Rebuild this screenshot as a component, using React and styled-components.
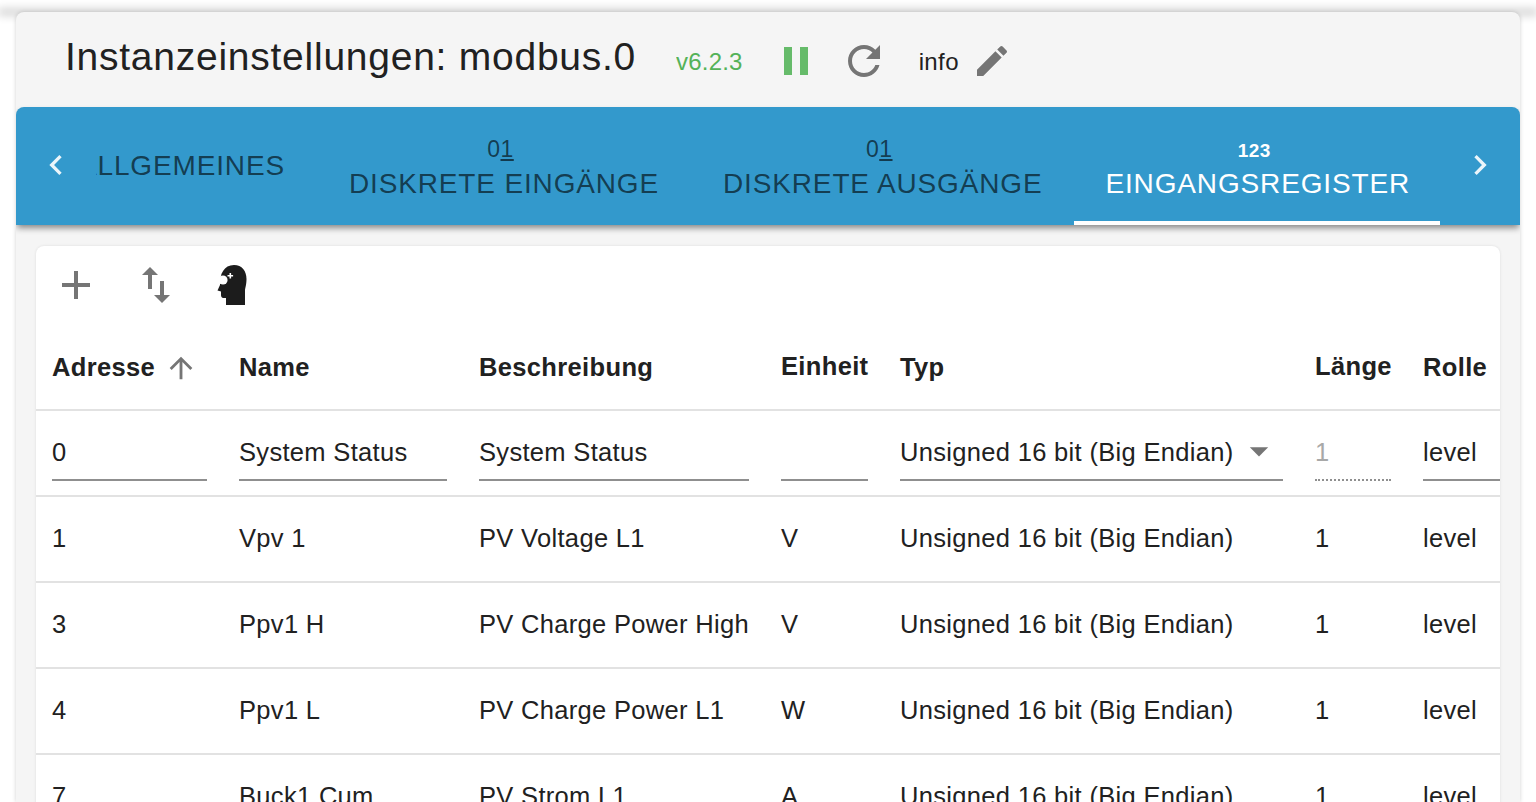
import React from 'react';
import styled, { createGlobalStyle } from 'styled-components';

const GlobalStyle = createGlobalStyle`
  html, body {
    margin: 0;
    height: 802px;
    overflow: hidden;
    background: #fff;
    font-family: "Liberation Sans", Arial, sans-serif;
  }
`;

const rows = [
  { address: '1', name: 'Vpv 1', description: 'PV Voltage L1', unit: 'V' },
  { address: '3', name: 'Ppv1 H', description: 'PV Charge Power High', unit: 'V' },
  { address: '4', name: 'Ppv1 L', description: 'PV Charge Power L1', unit: 'W' },
  { address: '7', name: 'Buck1 Cum', description: 'PV Strom L1', unit: 'A' },
];

const TYPE_LABEL = 'Unsigned 16 bit (Big Endian)';

const Icon = ({ d, size = 48, color = '#757575' }) => (
  <svg width={size} height={size} viewBox="0 0 24 24" fill={color}>
    <path d={d} />
  </svg>
);

const paths = {
  pause: 'M6 19h4V5H6v14zm8-14v14h4V5h-4z',
  refresh:
    'M17.65 6.35C16.2 4.9 14.21 4 12 4c-4.42 0-7.99 3.58-7.99 8s3.57 8 7.99 8c3.73 0 6.84-2.55 7.73-6h-2.08c-.82 2.33-3.04 4-5.65 4-3.31 0-6-2.69-6-6s2.69-6 6-6c1.66 0 3.14.69 4.22 1.78L13 11h7V4l-2.35 2.35z',
  edit: 'M3 17.25V21h3.75L17.81 9.94l-3.75-3.75L3 17.25zM20.71 7.04c.39-.39.39-1.02 0-1.41l-2.34-2.34a.9959.9959 0 0 0-1.41 0l-1.83 1.83 3.75 3.75 1.83-1.83z',
  add: 'M19 13h-6v6h-2v-6H5v-2h6V5h2v6h6v2z',
  swap: 'M16 17.01V10h-2v7.01h-3L15 21l4-3.99h-3zM9 3L5 6.99h3V14h2V6.99h3L9 3z',
  up: 'M4 12l1.41 1.41L11 7.83V20h2V7.83l5.58 5.59L20 12l-8-8-8 8z',
  left: 'M15.41 7.41 14 6l-6 6 6 6 1.41-1.41L10.83 12z',
  right: 'M10 6 8.59 7.41 13.17 12l-4.58 4.59L10 18l6-6z',
  drop: 'M7 10l5 5 5-5z',
};

const HeadSvg = styled.svg`
  margin-left: -8px;
`;

const HeadIcon = () => (
  <HeadSvg width="30" height="40" viewBox="0 0 30 40">
    <path
      fill="#1c1c1c"
      d="M9 40V33H6.5C4.5 33 4 31.5 4 30V26.5L0.5 25.5L3 20C2.5 9 7 0 17 0C25 0 29.5 6 29.5 14C29.5 20 28 23 28 26V40Z"
    />
    <circle cx="6" cy="15" r="4.6" fill="#fff" />
    <path d="M10.5 10h2V8h1.6v2h2v1.6h-2v2h-1.6v-2h-2z" fill="#fff" />
  </HeadSvg>
);

const TopEdge = styled.div`
  height: 0;
  box-shadow: 0 0 10px 2px rgba(0, 0, 0, 0.32);
`;

const Paper = styled.main`
  margin: 12px 16px 0;
  height: 790px;
  background: #f5f5f5;
  border-radius: 8px 8px 0 0;
  box-shadow: 0 0 4px rgba(0, 0, 0, 0.18);
  overflow: hidden;
`;

const TitleBar = styled.header`
  height: 95px;
  display: flex;
  align-items: center;
  padding-left: 49px;
  color: #212121;
`;

const Title = styled.h1`
  margin: 0 0 6px;
  font-size: 39px;
  font-weight: 400;
  letter-spacing: 0.75px;
  white-space: nowrap;
`;

const Version = styled.span`
  margin: 5px 0 0 40px;
  font-size: 24px;
  letter-spacing: 0.2px;
  color: #4caf50;
  opacity: 0.95;
`;

const TitleIcon = styled.span`
  display: flex;
  margin: ${({ $margin }) => $margin};
`;

const InstanceName = styled.span`
  margin: 5px 0 0 31px;
  font-size: 24px;
  letter-spacing: 0.4px;
`;

const TabBar = styled.nav`
  position: relative;
  height: 118px;
  display: flex;
  background: #3399cc;
  border-radius: 8px 8px 0 0;
  box-shadow: 0 4px 6px -1px rgba(0, 0, 0, 0.45);
`;

const ScrollButton = styled.div`
  flex: 0 0 80px;
  display: flex;
  align-items: center;
  justify-content: center;
  padding-bottom: 2px;
  opacity: 0.9;
`;

const TabScroller = styled.div`
  flex: 1;
  min-width: 0;
  display: flex;
  justify-content: flex-end;
  overflow: hidden;
`;

const Tab = styled.div`
  flex: 0 0 auto;
  box-sizing: border-box;
  height: 118px;
  padding: ${({ $withIcon }) => ($withIcon ? '26px' : '4px')}
    ${({ $active }) => ($active ? '30px' : '32px')} 0
    ${({ $active }) => ($active ? '31px' : '32px')};
  display: flex;
  flex-direction: column;
  align-items: center;
  justify-content: ${({ $withIcon }) => ($withIcon ? 'flex-start' : 'center')};
  color: ${({ $active }) => ($active ? '#fff' : 'rgba(0, 0, 0, 0.62)')};
  border-bottom: 4px solid ${({ $active }) => ($active ? '#fff' : 'transparent')};
  font-size: 28px;
  letter-spacing: 0.85px;
  text-transform: uppercase;
  white-space: nowrap;
`;

const TabGlyph = styled.span`
  height: 35px;
  margin-right: 7px;
  padding-top: ${({ $bold }) => ($bold ? '2px' : '0')};
  box-sizing: border-box;
  font-size: ${({ $bold }) => ($bold ? '19px' : '23px')};
  font-weight: ${({ $bold }) => ($bold ? 700 : 400)};
  line-height: 32px;
  letter-spacing: 0.5px;
  & u {
    text-underline-offset: 2px;
  }
`;

const Content = styled.section`
  padding: 21px 20px 0;
`;

const Card = styled.div`
  background: #fff;
  border-radius: 8px 8px 0 0;
  box-shadow: 0 0 3px rgba(0, 0, 0, 0.1);
  overflow: hidden;
`;

const Toolbar = styled.div`
  height: 78px;
  display: flex;
  align-items: center;
  padding-left: 16px;
  gap: 32px;
`;

const ToolButton = styled.span`
  display: flex;
  width: 48px;
  justify-content: center;
`;

const Table = styled.table`
  width: 1464px;
  border-collapse: collapse;
  table-layout: fixed;
  color: #212121;
  font-size: 25.5px;
  letter-spacing: 0.32px;
`;

const HeadCell = styled.th`
  box-sizing: border-box;
  height: 86px;
  padding: 2px 0 0 16px;
  text-align: left;
  font-weight: 700;
  letter-spacing: 0.35px;
  white-space: nowrap;
  border-bottom: 2px solid #e2e2e2;
`;

const HeadInner = styled.div`
  display: flex;
  align-items: center;
  gap: 9px;
  margin-top: ${({ $raised }) => ($raised ? '-3px' : '0')};
`;

const Cell = styled.td`
  box-sizing: border-box;
  height: 86px;
  padding: 0 0 2px 16px;
  white-space: nowrap;
  overflow: hidden;
  border-bottom: 2px solid #e2e2e2;
`;

const Field = styled.div`
  box-sizing: border-box;
  height: 58px;
  width: ${({ $width }) => $width}px;
  margin: 6px 0 6px;
  padding-top: 15px;
  display: flex;
  justify-content: space-between;
  color: ${({ $disabled }) => ($disabled ? '#a8a8a8' : 'inherit')};
  border-bottom: 2px ${({ $disabled }) => ($disabled ? 'dotted' : 'solid')} #8f8f8f;
`;

const DropArrow = styled.span`
  display: flex;
  margin: -9px 2px 0 0;
`;

const columns = [187, 240, 302, 119, 415, 108, 93];

const App = () => (
  <>
    <GlobalStyle />
    <TopEdge />
    <Paper>
      <TitleBar>
        <Title>Instanzeinstellungen: modbus.0</Title>
        <Version>v6.2.3</Version>
        <TitleIcon $margin="2px 0 0 29px">
          <Icon d={paths.pause} color="#66bb6a" />
        </TitleIcon>
        <TitleIcon $margin="2px 0 0 20px">
          <Icon d={paths.refresh} />
        </TitleIcon>
        <InstanceName>info</InstanceName>
        <TitleIcon $margin="2px 0 0 13px">
          <Icon d={paths.edit} size={40} />
        </TitleIcon>
      </TitleBar>

      <TabBar>
        <ScrollButton>
          <Icon d={paths.left} size={40} color="#fff" />
        </ScrollButton>
        <TabScroller>
          <Tab>Allgemeines</Tab>
          <Tab $withIcon>
            <TabGlyph>
              0<u>1</u>
            </TabGlyph>
            Diskrete Eingänge
          </Tab>
          <Tab $withIcon>
            <TabGlyph>
              0<u>1</u>
            </TabGlyph>
            Diskrete Ausgänge
          </Tab>
          <Tab $withIcon $active>
            <TabGlyph $bold>123</TabGlyph>
            Eingangsregister
          </Tab>
        </TabScroller>
        <ScrollButton>
          <Icon d={paths.right} size={40} color="#fff" />
        </ScrollButton>
      </TabBar>

      <Content>
        <Card>
          <Toolbar>
            <ToolButton>
              <Icon d={paths.add} />
            </ToolButton>
            <ToolButton>
              <Icon d={paths.swap} />
            </ToolButton>
            <ToolButton>
              <HeadIcon />
            </ToolButton>
          </Toolbar>
          <Table>
            <colgroup>
              {columns.map((width, i) => (
                <col key={i} style={{ width }} />
              ))}
            </colgroup>
            <thead>
              <tr>
                <HeadCell>
                  <HeadInner>
                    Adresse
                    <Icon d={paths.up} size={34} />
                  </HeadInner>
                </HeadCell>
                <HeadCell>Name</HeadCell>
                <HeadCell>Beschreibung</HeadCell>
                <HeadCell>
                  <HeadInner $raised>Einheit</HeadInner>
                </HeadCell>
                <HeadCell>Typ</HeadCell>
                <HeadCell>
                  <HeadInner $raised>Länge</HeadInner>
                </HeadCell>
                <HeadCell>Rolle</HeadCell>
              </tr>
            </thead>
            <tbody>
              <tr>
                <Cell>
                  <Field $width={155}>0</Field>
                </Cell>
                <Cell>
                  <Field $width={208}>System Status</Field>
                </Cell>
                <Cell>
                  <Field $width={270}>System Status</Field>
                </Cell>
                <Cell>
                  <Field $width={87} />
                </Cell>
                <Cell>
                  <Field $width={383}>
                    {TYPE_LABEL}
                    <DropArrow>
                      <Icon d={paths.drop} size={44} />
                    </DropArrow>
                  </Field>
                </Cell>
                <Cell>
                  <Field $width={76} $disabled>
                    1
                  </Field>
                </Cell>
                <Cell>
                  <Field $width={77}>level</Field>
                </Cell>
              </tr>
              {rows.map((row) => (
                <tr key={row.address}>
                  <Cell>{row.address}</Cell>
                  <Cell>{row.name}</Cell>
                  <Cell>{row.description}</Cell>
                  <Cell>{row.unit}</Cell>
                  <Cell>{TYPE_LABEL}</Cell>
                  <Cell>1</Cell>
                  <Cell>level</Cell>
                </tr>
              ))}
            </tbody>
          </Table>
        </Card>
      </Content>
    </Paper>
  </>
);

export default App;
